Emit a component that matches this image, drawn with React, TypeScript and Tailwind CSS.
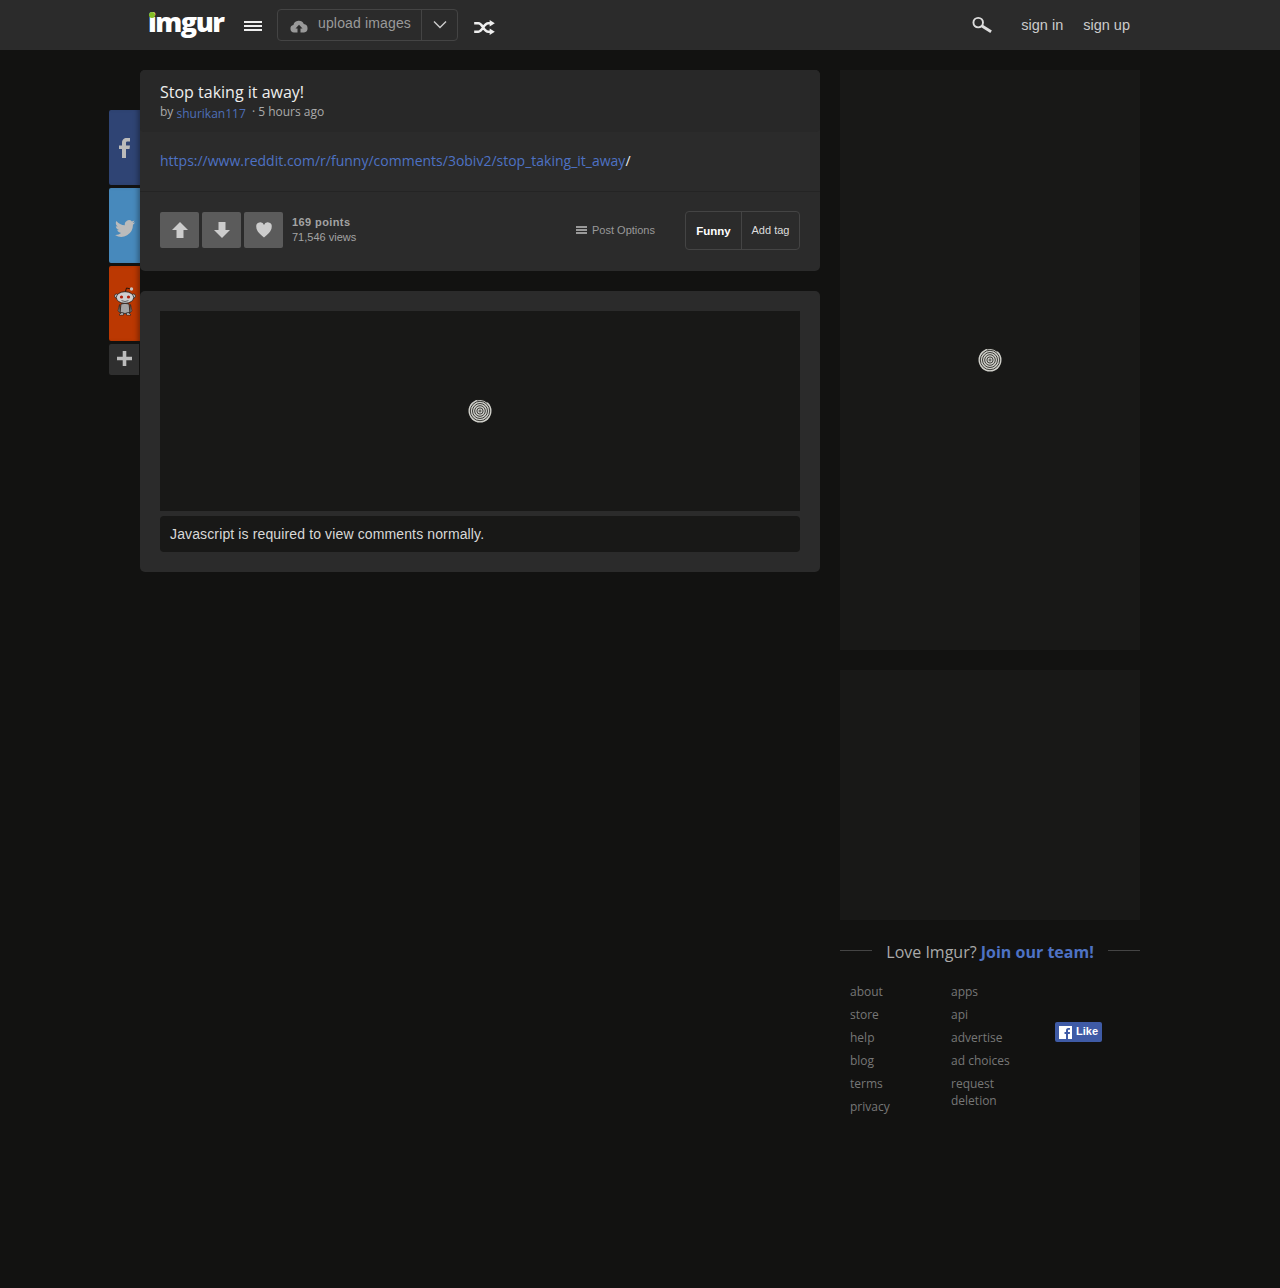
const Spiral = () => (
  <svg width="24" height="24" viewBox="0 0 24 24" fill="none">
    <circle cx="12" cy="12" r="11.5" fill="#d0d0ca" />
    <circle cx="12" cy="12" r="9.7" stroke="#3a3a36" strokeWidth="1" />
    <circle cx="12" cy="12" r="7.500" stroke="#3a3a36" strokeWidth="1" />
    <circle cx="12" cy="12" r="5.300" stroke="#3a3a36" strokeWidth="1" />
    <circle cx="12" cy="12" r="3.100" stroke="#3a3a36" strokeWidth="1" />
    <circle cx="12" cy="12" r="1" stroke="#3a3a36" strokeWidth=".9" />
    <path d="M9 .9A11.500 11.500 0 0 1 19.500 3.300" stroke="#1c1c1a" strokeWidth="1.300" />
  </svg>
);

const Alien = () => (
  <svg className="-mt-[3px]" width="26" height="32" viewBox="0 0 26 32">
    <path d="M13 7 14.500 2 19 3" fill="none" stroke="#2b1208" strokeWidth="1" />
    <circle cx="19.500" cy="3" r="1.700" fill="#c4c4c4" />
    <circle cx="4.500" cy="10" r="2" fill="#c4c4c4" stroke="#222" strokeWidth=".7" />
    <circle cx="21.500" cy="10" r="2" fill="#c4c4c4" stroke="#222" strokeWidth=".7" />
    <ellipse cx="13" cy="11.500" rx="8.700" ry="5.800" fill="#cfcfcf" stroke="#222" strokeWidth=".8" />
    <circle cx="9.500" cy="11" r="1.600" fill="#b0200a" />
    <circle cx="16.500" cy="11" r="1.600" fill="#b0200a" />
    <path d="M9.500 14.600q3.500 1.800 7 0" fill="none" stroke="#333" strokeWidth=".7" />
    <path d="M9 18Q13 16.800 17 18L18 26.500Q13 28.500 8 26.500Z" fill="#a5a5a5" stroke="#222" strokeWidth=".8" />
    <path d="M7.500 18.500 6 25 8 26.500ZM18.500 18.500 20 25 18 26.500Z" fill="#8d8d8d" stroke="#222" strokeWidth=".6" />
    <path d="M7 29h4.500v-2H9zM14.500 27v2H19l-2-2z" fill="#e0e0e0" stroke="#222" strokeWidth=".7" />
  </svg>
);

const Hamburger = ({ w, h, gap }: { w: string; h: string; gap: string }) => (
  <span className={`flex flex-col ${w} ${gap}`}>
    <span className={`${h} bg-current`} />
    <span className={`${h} bg-current`} />
    <span className={`${h} bg-current`} />
  </span>
);

const Footer1 = ["about", "store", "help", "blog", "terms", "privacy"];
const Footer2 = ["apps", "api", "advertise", "ad choices"];

const Vote = ({ children }: { children: React.ReactNode }) => (
  <div className="w-[39px] h-[36px] rounded-[2px] bg-[#5b5b5b] flex items-center justify-center">{children}</div>
);

export default function App() {
  return (
    <div className="min-h-[1288px] bg-[#121211] font-['Open_Sans',sans-serif] text-[#ccc]">
      <header className="h-[50px] bg-[#2b2b2b]">
        <div className="w-[1000px] mx-auto h-full flex items-center font-['Liberation_Sans',sans-serif]">
          <div className="relative ml-[8px] w-[78px] h-[50px]">
            <span className="absolute left-0 top-[4px] font-['Open_Sans',sans-serif] font-extrabold text-[27px] leading-[36px] tracking-[-1.500px] text-white">imgur</span>
            <span className="absolute left-[1px] top-[12px] w-[6px] h-[6px] rounded-full bg-[#85bf25]" />
          </div>
          <span className="ml-[18px] text-[#eee] mt-[2px]">
            <Hamburger w="w-[18px]" h="h-[2px]" gap="gap-[2px]" />
          </span>
          <div className="ml-[15px] w-[181px] h-[32px] border border-[#444] rounded-[4px] flex -mt-[1px]">
            <div className="w-[144px] flex items-center border-r border-[#444]">
              <svg className="ml-[12px] mt-[2px]" width="18" height="14" viewBox="0 0 18 14">
                <path fill="#999" d="M4 13.500A3.800 3.800 0 0 1 3.400 6 5.500 5.500 0 0 1 13.800 5 4.300 4.300 0 0 1 14 13.500H10.500V9.500H12.500L9 5.800 5.500 9.500H7.500V13.500Z" />
              </svg>
              <span className="ml-[10px] -mt-[3px] text-[14px] tracking-[0.15px] text-[#9a9a9a]">upload images</span>
            </div>
            <div className="flex-1 flex items-center justify-center">
              <svg width="14" height="9" viewBox="0 0 14 9" fill="none"><path d="M1 1.500 7 7.500 13 1.500" stroke="#ccc" strokeWidth="1.400" /></svg>
            </div>
          </div>
          <svg className="ml-[16px] mt-[4px]" width="21" height="15" viewBox="0 0 22 16" fill="none">
            <path d="M0 3.500H4.500C9 3.500 10 12.500 15 12.500H18M0 12.500H4.500C9 12.500 10 3.500 15 3.500H18" stroke="#eee" strokeWidth="2.800" />
            <path d="M16.500 0 22 3.500 16.500 7ZM16.500 9 22 12.500 16.500 16Z" fill="#eee" />
          </svg>
          <svg className="ml-auto -mt-[1px]" width="21" height="18" viewBox="0 0 22 18" fill="none">
            <circle cx="6.500" cy="6.500" r="5" stroke="#ddd" strokeWidth="2" />
            <path d="M10.500 10 20 16" stroke="#ddd" strokeWidth="3" />
          </svg>
          <span className="ml-[28px] mt-[1px] text-[14.500px] text-[#ccc]">sign in</span>
          <span className="ml-[20px] mr-[10px] mt-[1px] text-[14.500px] text-[#ccc]">sign up</span>
        </div>
      </header>

      <div className="w-[1000px] mx-auto flex gap-[20px] pt-[20px]">
        <div className="w-[680px] flex">
          <div className="w-[31px] -ml-[31px] mt-[40px] shrink-0 flex flex-col gap-[3px]">
            <div className="h-[75px] rounded-l-[2px] bg-[#2f4474] flex items-center justify-center shadow-[inset_-5px_0_5px_-3px_rgba(0,0,0,0.35)]">
              <svg className="mt-[1px]" width="11" height="20" viewBox="0 0 11 20"><path fill="#bbb" d="M3 20V11H0V7.500H3V5C3 1.500 5 0 7.500 0H11V3.500H8.500C7.300 3.500 7 4 7 5V7.500H11L10.500 11H7V20Z" /></svg>
            </div>
            <div className="h-[75px] rounded-l-[2px] bg-[#4789bc] flex items-center justify-center shadow-[inset_-5px_0_5px_-3px_rgba(0,0,0,0.35)]">
              <svg className="mt-[5px]" width="20" height="17" viewBox="0 0 24 20"><path fill="#bbb" d="M24 2.400c-.9.400-1.800.7-2.800.8 1-.6 1.800-1.600 2.200-2.700-1 .6-2 1-3.100 1.200A4.900 4.900 0 0 0 11.900 6.200C7.800 6 4.100 4 1.700.900.300 3.200 1 6.100 3.200 7.500c-.8 0-1.600-.2-2.200-.6 0 2.300 1.600 4.400 3.900 4.900-.7.200-1.500.2-2.200.1.600 2 2.400 3.400 4.600 3.400A9.900 9.900 0 0 1 0 17.800 14 14 0 0 0 21.500 5.400c1-.7 1.800-1.600 2.500-3z" /></svg>
            </div>
            <div className="h-[75px] rounded-l-[2px] bg-[#bb3802] flex items-center justify-center shadow-[inset_-5px_0_5px_-3px_rgba(0,0,0,0.35)]">
              <Alien />
            </div>
            <div className="h-[31px] mr-px rounded-l-[2px] bg-[#2f2f2f] flex items-center justify-center">
              <svg className="-mt-[2px] ml-px" width="15" height="15" viewBox="0 0 15 15"><path fill="#bbb" d="M5.700 0H9.300V5.700H15V9.300H9.300V15H5.700V9.300H0V5.700H5.700Z" /></svg>
            </div>
          </div>

          <main className="w-[680px] shrink-0">
            <section className="rounded-[5px] overflow-hidden bg-[#2b2b2b] h-[201px]">
              <div className="h-[62px] bg-[#282828] px-[20px] pt-[11px] rounded-b-[4px]">
                <h1 className="text-[16px] leading-[22px] text-[#eee]">Stop taking it away!</h1>
                <p className="text-[12px] leading-[16px] text-[#aaa] mt-[1px]">
                  by <span className="relative top-[2px] text-[#4e6fb8]">shurikan117</span> <span className="ml-[3px]">· 5 hours ago</span>
                </p>
              </div>
              <div className="h-[60px] border-b border-[#242424] px-[20px] pt-[19px] text-[14px] leading-[20px]">
                <span className="text-[#4e72c4]">https://www.reddit.com/r/funny/comments/3obiv2/stop_taking_it_away</span><span className="text-[#eee]">/</span>
              </div>
              <div className="px-[20px] pt-[20px] flex items-start font-['Liberation_Sans',sans-serif]">
                <div className="flex gap-[3px]">
                  <Vote><svg width="16" height="16" viewBox="0 0 16 16"><path fill="#ccc" d="M8 0 16 8H11.500V16H4.500V8H0Z" /></svg></Vote>
                  <Vote><svg width="16" height="16" viewBox="0 0 16 16"><path fill="#ccc" d="M4.500 0H11.500V8H16L8 16 0 8H4.500Z" /></svg></Vote>
                  <Vote><svg width="16" height="16" viewBox="0 0 16 16"><path fill="#ccc" d="M8 15.500C4 12 .3 9 .3 5A4 4 0 0 1 8 3 4 4 0 0 1 15.700 5C15.700 9 12 12 8 15.500Z" /></svg></Vote>
                </div>
                <div className="ml-[9px] mt-[3px] text-[11px] leading-[15px] text-[#a3a3a3]">
                  <div className="font-bold tracking-[0.4px]">169 points</div>
                  <div>71,546 views</div>
                </div>
                <div className="ml-auto mt-[11px] flex items-center gap-[5px] text-[11px] leading-[14px] text-[#999]">
                  <Hamburger w="w-[11px]" h="h-[1.500px]" gap="gap-[1.500px]" />
                  <span>Post Options</span>
                </div>
                <div className="ml-[30px] -mt-px h-[39px] w-[115px] border border-[#444] rounded-[4px] flex items-center text-white">
                  <div className="w-[56px] h-full border-r border-[#444] flex items-center justify-center text-[11.500px] font-bold pt-[3px]">Funny</div>
                  <div className="flex-1 text-center text-[11px] text-[#ddd] -mt-[1px]">Add tag</div>
                </div>
              </div>
            </section>

            <section className="mt-[20px] rounded-[5px] bg-[#2b2b2b] p-[20px]">
              <div className="h-[200px] bg-[#181817] flex items-center justify-center"><Spiral /></div>
              <div className="mt-[5px] h-[36px] rounded-[4px] bg-[#181817] px-[10px] flex items-center text-[14px] tracking-[0.13px] text-[#d8d8d8] font-['Liberation_Sans',sans-serif]">
                Javascript is required to view comments normally.
              </div>
            </section>
          </main>
        </div>

        <aside className="w-[300px] shrink-0">
          <div className="h-[580px] bg-[#181817] flex justify-center pt-[278px]"><Spiral /></div>
          <div className="h-[250px] mt-[20px] bg-[#181817]" />
          <div className="mt-[18px] flex items-center gap-[14px] h-[24px]">
            <div className="h-px flex-1 bg-[#444]" />
            <p className="text-[16px] leading-[24px] text-[#aaa] mt-[4px] whitespace-nowrap">
              Love Imgur? <span className="font-bold text-[#4e72c4]">Join our team!</span>
            </p>
            <div className="h-px flex-1 bg-[#444]" />
          </div>
          <div className="flex mt-[21px] pl-[10px] text-[12px] leading-[17px] text-[#777]">
            <ul className="w-[101px] flex flex-col gap-[6px]">
              {Footer1.map((t) => <li key={t}>{t}</li>)}
            </ul>
            <ul className="w-[104px] flex flex-col gap-[6px]">
              {Footer2.map((t) => <li key={t}>{t}</li>)}
              <li className="w-[70px]">request deletion</li>
            </ul>
            <div className="mt-[39px] h-[20px] w-[47px] rounded-[2px] bg-[#3f5ba6] flex items-center pl-[4px] gap-[4px] font-['Liberation_Sans',sans-serif] text-[11px] font-bold text-white">
              <svg width="13" height="13" viewBox="0 0 13 13"><path fill="#fff" d="M0 0H13V13H9V8H10.800L11 6H9V4.700C9 4.100 9.200 3.800 10 3.800H11V2H9.400C7.700 2 7 3 7 4.500V6H5.500V8H7V13H0Z" /></svg>
              <span className="-mt-[2px]">Like</span>
            </div>
          </div>
        </aside>
      </div>
    </div>
  );
}
